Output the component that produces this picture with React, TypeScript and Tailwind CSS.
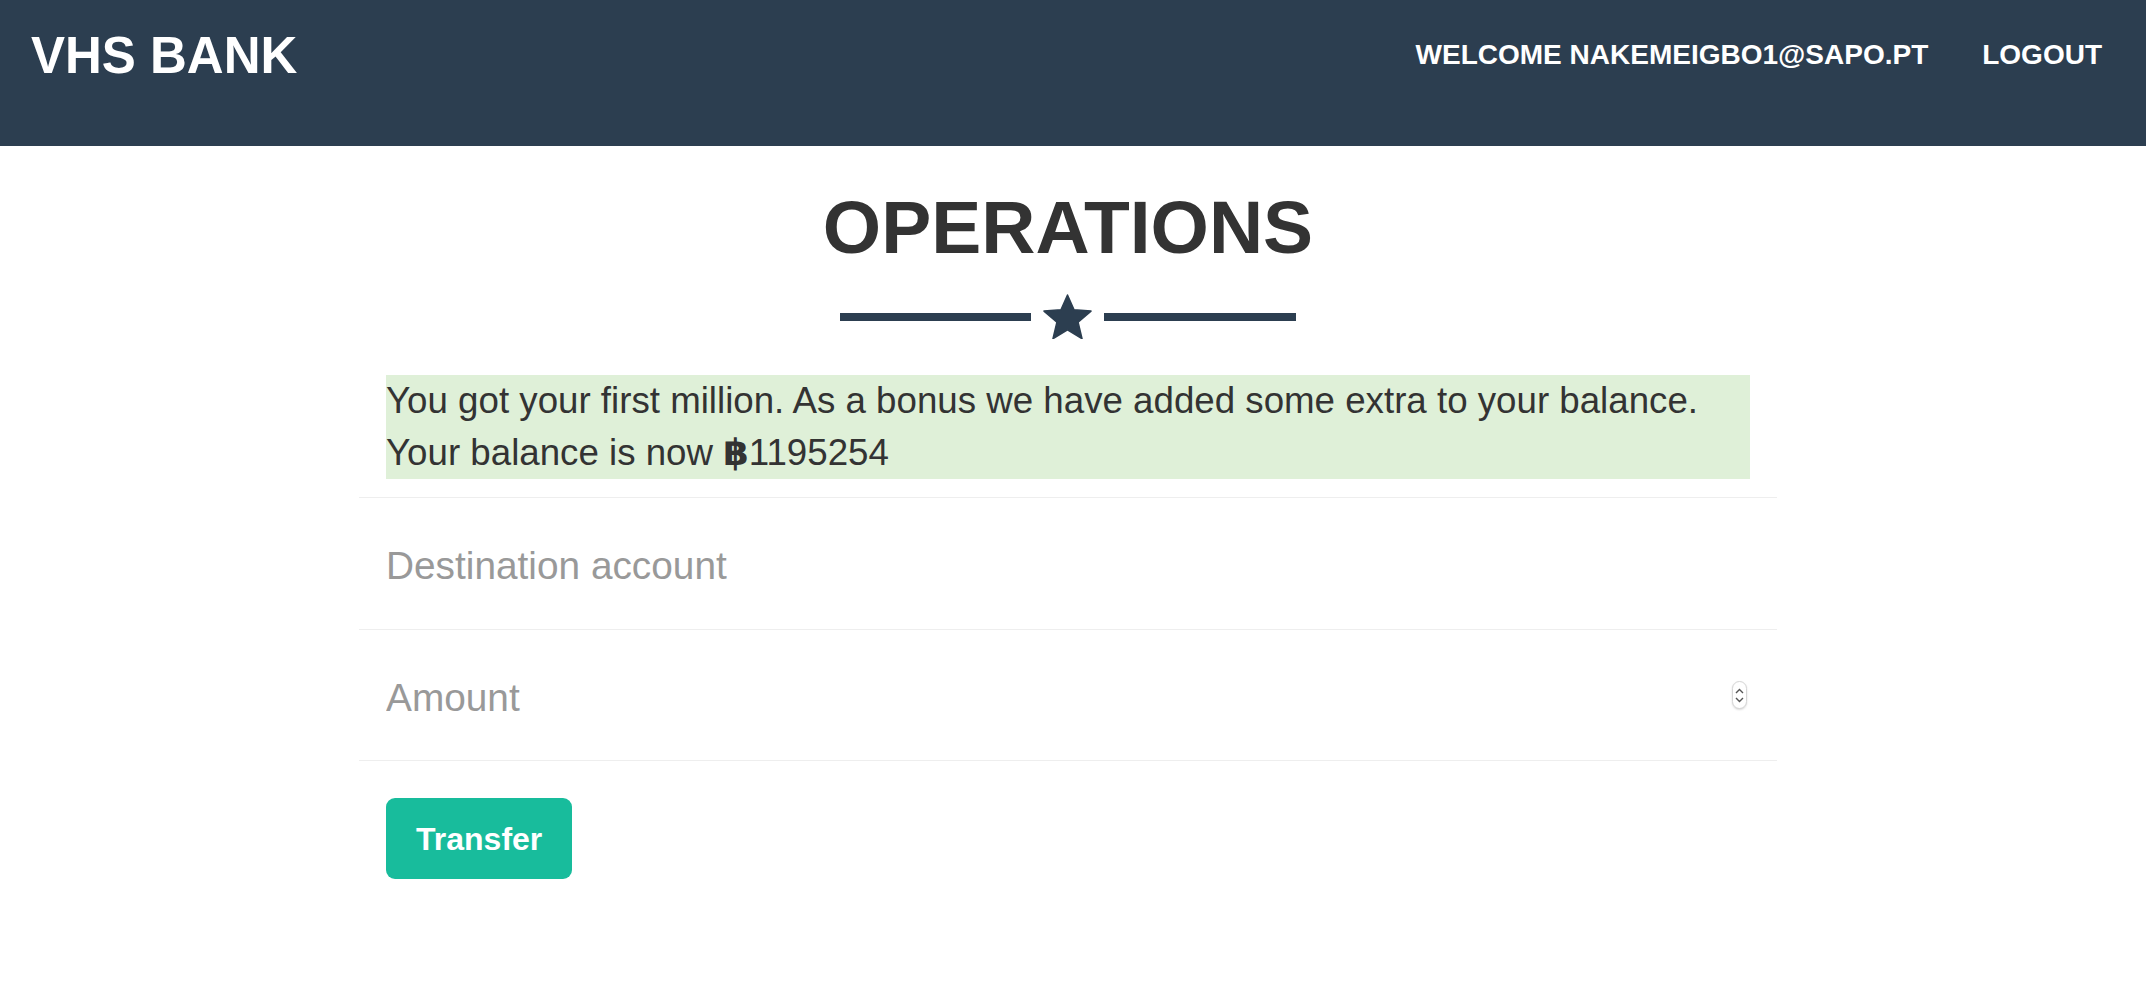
import React from 'react';

const FONT = { fontFamily: '"Liberation Sans", Arial, Helvetica, sans-serif' };

function Star() {
  return (
    <svg width="49" height="45" viewBox="2 0 96 91" className="block">
      <polygon
        points="50,2 63.22,31.8 97.55,34.55 71.4,56.95 79.39,90.45 50,72.5 20.61,90.45 28.6,56.95 2.45,34.55 36.78,31.8"
        fill="#2c3e50"
        stroke="#2c3e50"
        strokeWidth="3"
        strokeLinejoin="round"
      />
    </svg>
  );
}

function Spinner() {
  return (
    <div className="flex h-[28px] w-[15px] flex-col items-center justify-center gap-[3px] rounded-full border border-[#d6d6d6] bg-white shadow-[0_1px_2px_rgba(0,0,0,0.15)]">
      <svg width="9" height="6" viewBox="0 0 9 6">
        <path d="M1 5 L4.5 1.5 L8 5" fill="none" stroke="#555" strokeWidth="1.4" />
      </svg>
      <svg width="9" height="6" viewBox="0 0 9 6">
        <path d="M1 1 L4.5 4.5 L8 1" fill="none" stroke="#555" strokeWidth="1.4" />
      </svg>
    </div>
  );
}

export default function App() {
  return (
    <div className="min-h-screen bg-white text-[#333]" style={FONT}>
      <header className="h-[146px] bg-[#2c3e50] pb-[36px]">
        <div className="flex h-[110px] items-center justify-between pl-[31px] pr-[44px]">
          <a className="text-[51px] font-bold leading-none text-white">VHS BANK</a>
          <nav className="flex items-center gap-[54px] text-[28px] font-bold uppercase leading-none text-white">
            <span>Welcome nakemeigbo1@sapo.pt</span>
            <a>Logout</a>
          </nav>
        </div>
      </header>

      <main className="pr-[10px]">
        <div className="mx-auto w-[1418px]">
          <h1 className="mt-[40px] text-center text-[75px] font-bold uppercase leading-[82px] text-[#333]">
            Operations
          </h1>

          <div className="mt-[26px] flex items-center justify-center gap-[12px]">
            <div className="h-[8px] w-[191px] bg-[#2c3e50]" />
            <Star />
            <div className="h-[8px] w-[192px] bg-[#2c3e50]" />
          </div>

          <div className="mx-[27px] mt-[36px] bg-[#dff0d8] text-[36.7px] leading-[52px] text-[#333]">
            You got your first million. As a bonus we have added some extra to your balance.
            <br />
            Your balance is now{' '}
            <span className="font-bold" style={{ fontFamily: '"DejaVu Sans", sans-serif' }}>
              ฿
            </span>
            1195254
          </div>

          <form className="mt-[18px]" onSubmit={e => e.preventDefault()}>
            <div className="flex h-[132px] items-center border-t border-[#eeeeee] px-[27px] pt-[6px]">
              <input
                type="text"
                placeholder="Destination account"
                className="w-full bg-transparent text-[38.8px] text-[#333] outline-none placeholder:text-[#999999]"
                style={FONT}
              />
            </div>
            <div className="flex h-[132px] items-center gap-4 border-y border-[#eeeeee] pl-[27px] pr-[30px]">
              <input
                type="text"
                inputMode="numeric"
                placeholder="Amount"
                className="mt-[6px] w-full bg-transparent text-[38.8px] text-[#333] outline-none placeholder:text-[#999999]"
                style={FONT}
              />
              <Spinner />
            </div>

            <div className="px-[27px] pt-[37px]">
              <button
                type="submit"
                className="h-[81px] rounded-[9px] bg-[#18bc9c] px-[30px] text-[32px] font-bold text-white"
                style={FONT}
              >
                Transfer
              </button>
            </div>
          </form>
        </div>
      </main>
    </div>
  );
}
